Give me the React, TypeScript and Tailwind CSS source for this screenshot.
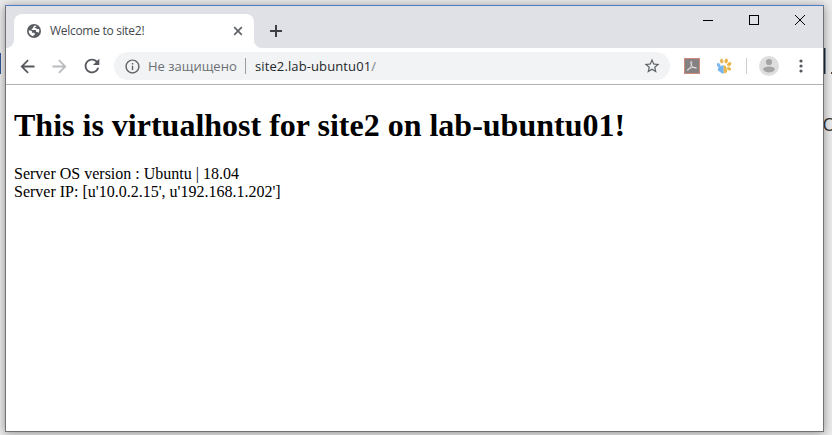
import React from "react";

type IconProps = { d: string; size: string; color: string };

function Icon({ d, size, color }: IconProps) {
  return (
    <svg viewBox="0 0 24 24" fill="currentColor" className={`shrink-0 ${size} ${color}`}>
      <path d={d} />
    </svg>
  );
}

const ARROW_BACK = "M20 10.8H8L13.400 5.400 12 4l-8 8 8 8 1.410-1.410L8 13.200h12z";
const ARROW_FORWARD = "M12 4l-1.410 1.410L16 10.800H4v2.400h12l-5.410 5.390L12 20l8-8z";
const REFRESH =
  "M17.65 6.35C16.2 4.9 14.21 4 12 4c-4.42 0-7.99 3.58-7.99 8s3.57 8 7.99 8c3.73 0 6.84-2.55 7.73-6h-2.08c-.82 2.33-3.04 4-5.65 4-3.31 0-6-2.69-6-6s2.69-6 6-6c1.66 0 3.14.69 4.22 1.78L13 11h7V4l-2.35 2.35z";
const INFO =
  "M11 7h2v2h-2zm0 4h2v6h-2zm1-9C6.48 2 2 6.48 2 12s4.48 10 10 10 10-4.48 10-10S17.52 2 12 2zm0 18c-4.41 0-8-3.59-8-8s3.59-8 8-8 8 3.59 8 8-3.59 8-8 8z";
const STAR =
  "M22 9.24l-7.19-.62L12 2 9.19 8.63 2 9.24l5.46 4.73L5.82 21 12 17.27 18.18 21l-1.63-7.03L22 9.24zM12 15.4l-3.76 2.27 1-4.28-3.32-2.88 4.38-.38L12 6.1l1.71 4.04 4.38.38-3.32 2.88 1 4.28L12 15.4z";

function Globe() {
  return (
    <svg viewBox="0 0 14 14" className="size-3.5 shrink-0">
      <circle cx="7" cy="7" r="7" fill="#5a5e63" />
      <path
        d="M7.7 1.6L6 3.2v1.4H4.8v1.5h3.1c.8 0 1.2.4 1.2 1.1v.7H10c.8 0 1.3.4 1.5 1.1.5-.7.8-1.5.8-2.4 0-.5-.1-1-.3-1.5h-1.6c-.7 0-1.2-.5-1.2-1.2H7.7V3.1h1.5v-1c-.5-.3-1-.4-1.5-.5zM1.7 6.5c-.2 2.7 1.8 5.2 4.8 5.8v-1.4h1.2V9.4c0-.4-.3-.7-.7-.7H5V7.5L4 6.5z"
        fill="#fff"
      />
    </svg>
  );
}

function TabStrip() {
  return (
    <div className="flex h-[42px] shrink-0 bg-[#dfe1e6]">
      <div className="mt-2 flex h-[34px] items-end">
        <svg viewBox="0 0 8 8" className="size-2">
          <path d="M8 0v8H0a8 8 0 0 0 8-8z" fill="#fff" />
        </svg>
        <div className="flex h-[34px] w-60 items-center rounded-t-lg bg-white pl-[13px] pr-[11px]">
          <Globe />
          <span className="ml-[9px] w-[183px] whitespace-nowrap font-['Open_Sans','Noto_Sans',sans-serif] text-[12px] leading-4 tracking-[-0.29px] text-[#45494d]">
            Welcome to site2!
          </span>
          <svg viewBox="0 0 10 10" className="size-2.5 shrink-0" stroke="#5f6368" strokeWidth="1.7">
            <path d="M1.2 1.2l7.6 7.6M8.8 1.2L1.2 8.8" />
          </svg>
        </div>
        <svg viewBox="0 0 8 8" className="size-2">
          <path d="M0 0v8h8a8 8 0 0 1-8-8z" fill="#fff" />
        </svg>
      </div>
      <svg viewBox="0 0 12 12" className="ml-2 mt-[19px] size-3" stroke="#3c4043" strokeWidth="2">
        <path d="M6 0v12M0 6h12" />
      </svg>
      <div className="ml-auto mr-[18px] mt-[9px] flex h-[11px] gap-9">
        <svg viewBox="0 0 10 11" className="h-[11px] w-2.5" stroke="#000" shapeRendering="crispEdges">
          <path d="M0 5.5h10" />
        </svg>
        <svg viewBox="0 0 10 11" className="h-[11px] w-2.5" fill="none" stroke="#000" shapeRendering="crispEdges">
          <path d="M.5 .5h9v9h-9z" />
        </svg>
        <svg viewBox="0 0 10 11" className="h-[11px] w-2.5" stroke="#000">
          <path d="M0 0l10 10M10 0L0 10" />
        </svg>
      </div>
    </div>
  );
}

function AcrobatIcon() {
  return (
    <svg viewBox="0 0 16 16" className="size-4 shrink-0">
      <rect x=".5" y=".5" width="15" height="15" fill="#858182" stroke="#d08a7c" />
      <path
        d="M7.2 3.200c.9.200.7 2.200.2 3.900-.7 2.400-2.200 4.600-3.400 5.200-.8.300-1-.4-.3-1 1.700-1.400 6-2.300 8.200-1.800.8.300.7.900-.2.800-1.700-.2-4-1.900-4.700-4-.4-1.200-.5-3.100.2-3.100z"
        fill="none"
        stroke="#e4e2e2"
        strokeWidth=".9"
      />
    </svg>
  );
}

function PawIcon() {
  return (
    <svg viewBox="0 0 16 16" className="size-4 shrink-0">
      <ellipse cx="2.7" cy="7.200" rx="1.700" ry="2.300" transform="rotate(-25 2.7 7.2)" fill="#7fb9ee" />
      <ellipse cx="5.700" cy="3.100" rx="1.700" ry="2.400" transform="rotate(-10 5.7 3.1)" fill="#e2b85c" />
      <ellipse cx="10.200" cy="3" rx="1.700" ry="2.400" transform="rotate(18 10.2 3)" fill="#e9b548" />
      <ellipse cx="13.200" cy="6.200" rx="1.700" ry="2.300" transform="rotate(45 13.2 6.2)" fill="#e9b548" />
      <ellipse cx="13" cy="10.700" rx="2.200" ry="1.600" transform="rotate(18 13 10.7)" fill="#e9b548" />
      <path d="M7.7 7.200c-3.200.1-5.900 2.300-5.900 4.500 0 1.800 2.300 1.500 3 2.700.6 1.200 1.900 1.400 2.900.8z" fill="#75b5f0" />
      <path d="M7.700 7.200c2.300-.1 2.900 2 2.800 3.300-.1 1.200 1 1.700.6 3-.5 1.600-2.200 1.900-3.400 1.700z" fill="#e9b548" />
    </svg>
  );
}

function Toolbar() {
  return (
    <div className="flex h-[37px] shrink-0 items-center border-b border-[#b2b2b2] bg-white pl-[11px] pr-[20px]">
      <Icon d={ARROW_BACK} size="size-[21px]" color="text-[#55585d]" />
      <Icon d={ARROW_FORWARD} size="ml-[11px] size-[21px]" color="text-[#b9bbbd]" />
      <Icon d={REFRESH} size="ml-[11px] size-[22px]" color="text-[#55585d]" />
      <div className="ml-[11px] flex h-7 w-[556px] items-center whitespace-nowrap rounded-full bg-[#f1f3f4] pl-[9.5px] pr-[9px] font-['Open_Sans','Noto_Sans',sans-serif] text-[13px] leading-5">
        <Icon d={INFO} size="size-[17px]" color="text-[#5f6368]" />
        <span className="ml-[7.5px] w-[97px] text-[#6b6f74]">Не защищено</span>
        <span className="h-4 w-px bg-[#9a9da0]" />
        <span className="ml-[9px] tracking-[0.11px] text-[#25282c]">
          site2.lab-ubuntu01<span className="text-[#7b7f84]">/</span>
        </span>
        <Icon d={STAR} size="ml-auto size-[18px]" color="text-[#5f6368]" />
      </div>
      <div className="ml-3.5 flex items-center">
        <AcrobatIcon />
        <span className="ml-4 flex">
          <PawIcon />
        </span>
        <span className="ml-3.5 h-4 w-px bg-[#cdcfd1]" />
        <svg viewBox="0 0 20 20" className="ml-3 size-5">
          <circle cx="10" cy="10" r="10" fill="#dedede" />
          <circle cx="10" cy="6" r="3.100" fill="#a5a5a5" />
          <path d="M4 13.6c0-2 3.2-3.2 6-3.2s6 1.2 6 3.2c-1.4 1.8-3.5 2.9-6 2.9s-4.6-1.1-6-2.9z" fill="#a5a5a5" />
        </svg>
        <svg viewBox="0 0 4 14" className="ml-[20.5px] h-3.5 w-1" fill="#55585d">
          <circle cx="2" cy="2" r="1.6" />
          <circle cx="2" cy="7" r="1.6" />
          <circle cx="2" cy="12" r="1.6" />
        </svg>
      </div>
    </div>
  );
}

export default function App() {
  return (
    <div className="relative h-[435px] w-[832px] overflow-hidden bg-[#ebebeb] pl-[5px] pt-[5px]">
      {/* Fragments of the page behind the window */}
      <div className="absolute left-0 top-[53px] h-[21px] w-px bg-[#2d5796]" />
      <div className="absolute left-[823px] top-[48px] h-[26px] w-[3px] border-r border-[#7b98ad] bg-[#252a35]" />
      <div className="absolute left-[831px] top-[72px] h-0.5 w-px bg-[#51452f]" />
      <span className="absolute left-[822.5px] top-[112px] font-['Open_Sans',sans-serif] text-[18px] leading-6 text-[#333]">О</span>
      <div className="relative flex h-[427px] w-[819px] flex-col border border-[#707274] border-t-[#527bc4] bg-white shadow-[0_1px_9px_rgba(0,0,0,0.4)]">
        <TabStrip />
        <Toolbar />
        <main className="flex flex-col px-2 font-['Liberation_Serif',serif] text-black">
          <h1 className="mt-[22px] whitespace-nowrap text-[32px] font-bold leading-[37px]">
            This is virtualhost for site2 on lab-ubuntu01!
          </h1>
          <p className="mt-[21px] whitespace-nowrap text-[16px] leading-[18px]">
            Server OS version : Ubuntu | 18.04
            <br />
            Server IP: [u'10.0.2.15', u'192.168.1.202']
          </p>
        </main>
      </div>
    </div>
  );
}
